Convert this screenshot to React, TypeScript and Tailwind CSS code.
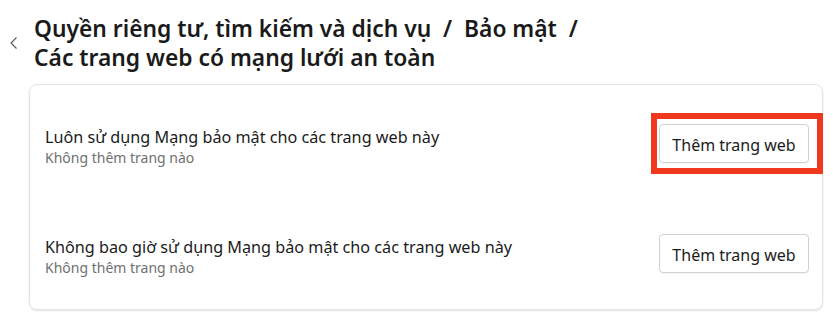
import React from "react";

function Row({ title, sub, highlight }: { title: string; sub: string; highlight?: boolean }) {
  return (
    <div className="h-[110px] flex items-center justify-between pl-[15px] pr-[13px]">
      <div className="flex flex-col mt-[8px]">
        <div className="text-[16.2px] leading-[20px] text-[#1b1b1b]">{title}</div>
        <div className="text-[14px] leading-[18px] text-[#707070] mt-[2px]">{sub}</div>
      </div>
      <div className="relative">
        <button className="w-[150px] h-[39px] pt-[3px] rounded-[4px] border border-[#d1d1d1] bg-white text-[16px] leading-[20px] text-[#1b1b1b] shadow-[0_1px_1px_rgba(0,0,0,0.04)]">
          Thêm trang web
        </button>
        {highlight && (
          <div className="absolute left-[-8px] right-[-14px] top-[-11px] bottom-[-11px] border-[6px] border-[#f0381f] pointer-events-none" />
        )}
      </div>
    </div>
  );
}

export default function App() {
  return (
    <div
      className="w-[833px] h-[315px] bg-white overflow-hidden"
      style={{ fontFamily: '"Noto Sans", "Open Sans", sans-serif' }}
    >
      <div className="flex pt-[14px] pl-[10px]">
        <div className="w-[24px] pt-[23px]">
          <svg width="8" height="12" viewBox="0 0 8 12" fill="none">
            <path d="M6.5 0.5L1 6L6.5 11.5" stroke="#555" strokeWidth="1.1" />
          </svg>
        </div>
        <h1 className="text-[22.8px] leading-[29px] font-semibold text-[#1a1a1a]">
          Quyền riêng tư, tìm kiếm và dịch vụ&nbsp; /&nbsp; Bảo mật&nbsp; /
          <br />
          Các trang web có mạng lưới an toàn
        </h1>
      </div>
      <div className="ml-[29px] mt-[12px] w-[794px] h-[226px] rounded-[8px] border border-[#e3e3e3] shadow-[0_1px_2px_rgba(0,0,0,0.12)] pt-[3px]">
        <Row title="Luôn sử dụng Mạng bảo mật cho các trang web này" sub="Không thêm trang nào" highlight />
        <Row title="Không bao giờ sử dụng Mạng bảo mật cho các trang web này" sub="Không thêm trang nào" />
      </div>
    </div>
  );
}
